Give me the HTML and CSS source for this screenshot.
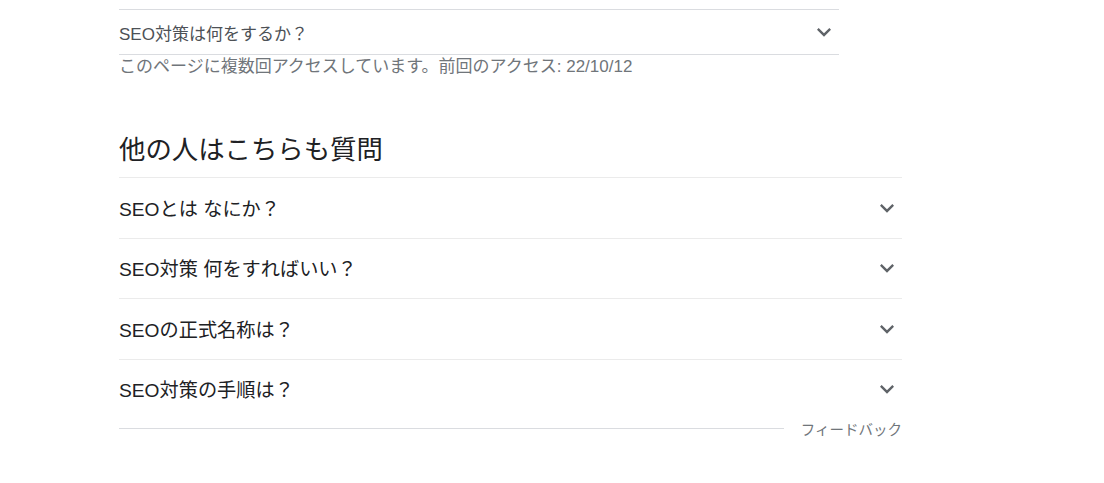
FILE: index.html
```html
<!DOCTYPE html>
<html lang="ja">
<head>
<meta charset="utf-8">
<title>他の人はこちらも質問</title>
<link rel="stylesheet" href="styles.css">
</head>
<body>
<div class="page">
  <div class="related">
    <div class="related-row">
      <span class="related-text">SEO対策は何をするか？</span>
      <svg class="chev" viewBox="0 0 24 24" width="28" height="28"><path d="M16.59 8.59L12 13.17 7.41 8.59 6 10l6 6 6-6z"/></svg>
    </div>
  </div>
  <div class="visited">このページに複数回アクセスしています。前回のアクセス: 22/10/12</div>

  <h2 class="paa-title">他の人はこちらも質問</h2>
  <div class="paa">
    <div class="paa-row">
      <span class="paa-text">SEOとは なにか？</span>
      <svg class="chev" viewBox="0 0 24 24" width="28" height="28"><path d="M16.59 8.59L12 13.17 7.41 8.59 6 10l6 6 6-6z"/></svg>
    </div>
    <div class="paa-row">
      <span class="paa-text">SEO対策 何をすればいい？</span>
      <svg class="chev" viewBox="0 0 24 24" width="28" height="28"><path d="M16.59 8.59L12 13.17 7.41 8.59 6 10l6 6 6-6z"/></svg>
    </div>
    <div class="paa-row">
      <span class="paa-text">SEOの正式名称は？</span>
      <svg class="chev" viewBox="0 0 24 24" width="28" height="28"><path d="M16.59 8.59L12 13.17 7.41 8.59 6 10l6 6 6-6z"/></svg>
    </div>
    <div class="paa-row">
      <span class="paa-text">SEO対策の手順は？</span>
      <svg class="chev" viewBox="0 0 24 24" width="28" height="28"><path d="M16.59 8.59L12 13.17 7.41 8.59 6 10l6 6 6-6z"/></svg>
    </div>
    <div class="feedback">
      <div class="feedback-line"></div>
      <span class="feedback-text">フィードバック</span>
    </div>
  </div>
</div>
</body>
</html>
```

FILE: styles.css
```css
html, body {
  margin: 0;
  padding: 0;
  background: #fff;
}
body {
  font-family: "Liberation Sans", "Noto Sans CJK JP", sans-serif;
  color: #202124;
}
.page {
  padding: 9px 0 0 119px;
}
.related {
  width: 720px;
  border-top: 1px solid #dadce0;
  border-bottom: 1px solid #dadce0;
}
.related-row {
  height: 44px;
  display: flex;
  align-items: center;
  justify-content: space-between;
}
.related-text {
  font-size: 17px;
  color: #4d5156;
}
.chev {
  fill: #5f6368;
  margin-right: 1px;
  flex: none;
}
.visited {
  font-size: 17px;
  line-height: 24px;
  color: #70757a;
}
.paa-title {
  margin: 55px 0 0 0;
  font-size: 26.4px;
  font-weight: normal;
  line-height: 32px;
  color: #202124;
  padding-bottom: 11px;
}
.paa {
  width: 783px;
}
.paa-row {
  height: 59.5px;
  border-top: 1px solid #ebebeb;
  display: flex;
  align-items: center;
  justify-content: space-between;
}
.paa-text {
  font-size: 19.2px;
  color: #202124;
}
.feedback {
  height: 18px;
  margin-top: 0.5px;
  display: flex;
  align-items: center;
  gap: 17px;
}
.feedback-line {
  flex: 1;
  height: 1px;
  background: #dadce0;
}
.feedback-text {
  font-size: 14.5px;
  color: #70757a;
}
```
